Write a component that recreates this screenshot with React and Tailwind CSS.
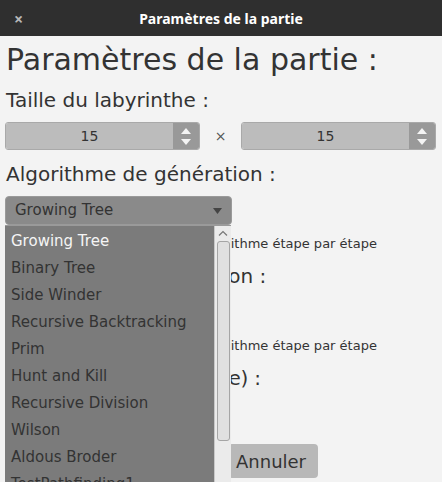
import React from "react";

const font = { fontFamily: '"DejaVu Sans", "Liberation Sans", sans-serif' };

function Spinner({ value, w }) {
  return (
    <div className={`flex h-[28px] ${w} rounded-[3px] overflow-hidden border border-[#a9a9a9]`}>
      <div className="flex-1 bg-[#bcbcbc] flex items-center justify-center text-[14px] text-[#333]">{value}</div>
      <div className="w-[26px] bg-[#999999] flex flex-col items-center justify-center gap-[5px]">
        <svg width="10" height="6" viewBox="0 0 10 6"><path d="M0 6 L5 0 L10 6 Z" fill="#f4f4f4" /></svg>
        <svg width="10" height="6" viewBox="0 0 10 6"><path d="M0 0 L5 6 L10 0 Z" fill="#f4f4f4" /></svg>
      </div>
    </div>
  );
}

function Combo({ value, w }) {
  return (
    <div className={`h-[29px] ${w} rounded-[4px] bg-[#8a8a8a] border border-[#9a9a9a] flex items-center pl-[9px] pr-[9px] text-[15px] text-[#333]`}>
      <span className="flex-1">{value}</span>
      <svg width="9" height="6" viewBox="0 0 9 6"><path d="M0 0 L4.5 6 L9 0 Z" fill="#444" /></svg>
    </div>
  );
}

function Check({ label }) {
  return (
    <div className="flex items-center gap-[17px] h-[20px] text-[13px] text-[#333] pl-[3px]">
      <div className="w-[15px] h-[15px] border border-[#888] bg-[#ddd] rounded-[2px]" />
      <span className="whitespace-nowrap">{label}</span>
    </div>
  );
}

const items = [
  "Growing Tree",
  "Binary Tree",
  "Side Winder",
  "Recursive Backtracking",
  "Prim",
  "Hunt and Kill",
  "Recursive Division",
  "Wilson",
  "Aldous Broder",
  "TestPathfinding1",
];

export default function App() {
  return (
    <div className="w-[442px] h-[482px] overflow-hidden relative bg-[#f3f3f3]" style={font}>
      {/* Title bar */}
      <div className="h-[36px] bg-[#2f2f2f] flex items-center relative">
        <span className="absolute left-[14px] top-[7px] text-[#b8b8b8] text-[16px] font-bold" style={{ fontFamily: '"Noto Sans", sans-serif' }}>×</span>
        <div className="flex-1 text-center text-white text-[14px] font-bold" style={{ fontFamily: '"Noto Sans", "Open Sans", sans-serif' }}>
          Paramètres de la partie
        </div>
      </div>

      {/* Body */}
      <div className="pl-[5px] pt-[6px] flex flex-col text-[#333]">
        <div className="text-[30px] leading-[36px] pl-[1px]">Paramètres de la partie :</div>
        <div className="text-[20px] leading-[24px] mt-[10px] pl-[1px]">Taille du labyrinthe :</div>
        <div className="flex items-center mt-[10px]">
          <Spinner value="15" w="w-[195px]" />
          <div className="w-[41px] text-center text-[14px] text-[#555]">×</div>
          <Spinner value="15" w="w-[195px]" />
        </div>
        <div className="text-[20px] leading-[24px] mt-[12px] pl-[1px]">Algorithme de génération :</div>
        <div className="mt-[10px]"><Combo value="Growing Tree" w="w-[227px]" /></div>
        <div className="mt-[9px] ml-[1px]"><Check label="Afficher l'exécution de l'algorithme étape par étape" /></div>
        <div className="text-[20px] leading-[24px] mt-[10px] pl-[1px]">Algorithme de résolution :</div>
        <div className="mt-[10px]"><Combo value="A*" w="w-[190px]" /></div>
        <div className="mt-[9px] ml-[1px]"><Check label="Afficher l'exécution de l'algorithme étape par étape" /></div>
        <div className="text-[20px] leading-[24px] mt-[10px] pl-[1px] tracking-[-0.3px] whitespace-nowrap">Intervalle (ms par étape) :</div>
        <div className="mt-[10px]"><Spinner value="100" w="w-[195px]" /></div>
        <div className="flex gap-[8px] mt-[16px]">
          <div className="h-[34px] w-[215px] rounded-[4px] bg-[#b8b8b8] flex items-center justify-center text-[18px]">Valider</div>
          <div className="h-[34px] rounded-[4px] bg-[#b8b8b8] flex items-center pl-[8px] pr-[12px] text-[18px]">Annuler</div>
        </div>
      </div>

      {/* Dropdown popup */}
      <div className="absolute left-[5px] top-[225px] w-[226px] h-[300px] flex bg-[#7b7b7b] border-t border-[#9a9a9a]">
        <div className="flex-1 flex flex-col pt-[2px]">
          {items.map((it, i) => (
            <div
              key={it}
              className={`h-[27px] leading-[27px] pl-[6px] text-[15px] whitespace-nowrap ${i === 0 ? "text-[#f5f5f5]" : "text-[#333]"}`}
            >
              {it}
            </div>
          ))}
        </div>
        <div className="w-[17px] bg-[#ebebeb] border-l border-[#c8c8c8] flex flex-col items-center">
          <svg className="mt-[4px]" width="10" height="6" viewBox="0 0 10 6"><path d="M1 5.5 L5 1.5 L9 5.5" fill="none" stroke="#777" strokeWidth="1.2" /></svg>
          <div className="mt-[5px] w-[13px] h-[200px] rounded-[3px] bg-[#e0e0e0] border border-[#a5a5a5]" />
        </div>
      </div>
    </div>
  );
}
